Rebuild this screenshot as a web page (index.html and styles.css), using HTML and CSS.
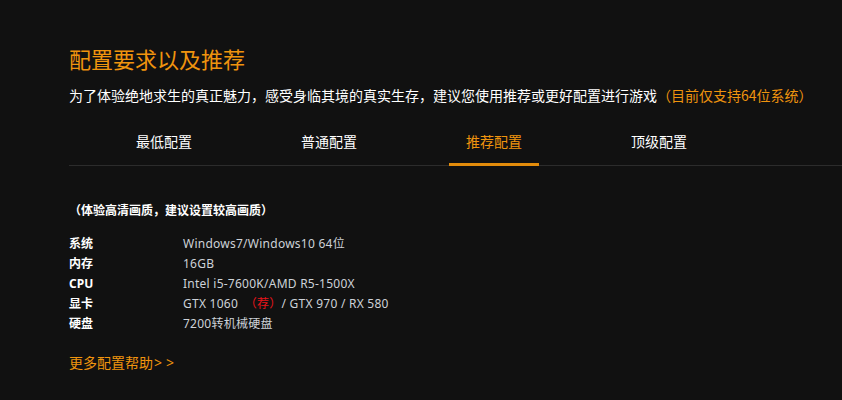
FILE: index.html
```html
<!DOCTYPE html>
<html lang="zh-CN">
<head>
<meta charset="utf-8">
<title>配置要求以及推荐</title>
<link rel="stylesheet" href="styles.css">
</head>
<body>
<div class="page">
  <h1 class="title">配置要求以及推荐</h1>
  <p class="intro">为了体验绝地求生的真正魅力，感受身临其境的真实生存，建议您使用推荐或更好配置进行游戏<span class="hint">（目前仅支持64位系统）</span></p>
  <div class="tabs">
    <div class="tab">最低配置</div>
    <div class="tab">普通配置</div>
    <div class="tab active">推荐配置</div>
    <div class="tab">顶级配置</div>
  </div>
  <p class="note">（体验高清画质，建议设置较高画质）</p>
  <dl class="specs">
    <div class="row"><dt>系统</dt><dd>Windows7/Windows10 64位</dd></div>
    <div class="row"><dt>内存</dt><dd>16GB</dd></div>
    <div class="row"><dt>CPU</dt><dd>Intel i5-7600K/AMD R5-1500X</dd></div>
    <div class="row"><dt>显卡</dt><dd>GTX 1060 &nbsp;<span class="rec">（荐）</span>/ GTX 970 / RX 580</dd></div>
    <div class="row"><dt>硬盘</dt><dd>7200转机械硬盘</dd></div>
  </dl>
  <a class="more" href="#">更多配置帮助<span class="arrows">&gt;&gt;</span></a>
</div>
</body>
</html>
```

FILE: styles.css
```css
html, body {
  margin: 0;
  padding: 0;
  background: #111111;
}
body {
  font-family: "Noto Sans", "Noto Sans CJK SC", sans-serif;
  color: #ffffff;
  overflow: hidden;
}
.page {
  padding: 42px 0 0 69px;
}
.title {
  margin: 0;
  font-size: 22px;
  line-height: 32px;
  font-weight: normal;
  color: #ef940e;
  font-family: "Noto Sans CJK SC", sans-serif;
}
.intro {
  margin: 11px 0 0;
  font-size: 14px;
  line-height: 20px;
  font-family: "Noto Sans CJK SC", sans-serif;
  color: #ffffff;
}
.hint {
  color: #ef940e;
}
.tabs {
  display: flex;
  gap: 75px;
  margin-top: 26px;
  padding-left: 50px;
  border-bottom: 1px solid #2c2c2c;
}
.tab {
  width: 90px;
  text-align: center;
  font-size: 14px;
  line-height: 20px;
  padding-bottom: 12px;
  border-bottom: 3px solid transparent;
  margin-bottom: -1px;
  font-family: "Noto Sans CJK SC", sans-serif;
  color: #ffffff;
}
.tab.active {
  color: #ef940e;
  border-bottom-color: #e38c0b;
}
.note {
  margin: 34px 0 0;
  font-size: 12px;
  line-height: 20px;
  font-weight: bold;
  font-family: "Noto Sans CJK SC", sans-serif;
}
.specs {
  margin: 14px 0 0;
}
.row {
  display: flex;
  font-size: 12px;
  line-height: 20px;
}
.row dt {
  width: 114px;
  font-weight: bold;
  color: #ffffff;
}
.row dd {
  margin: 0;
  color: #cdd2d8;
  letter-spacing: 0.25px;
}
.rec {
  color: #e8141a;
}
.more {
  display: inline-block;
  margin-top: 19px;
  font-size: 14px;
  line-height: 20px;
  color: #ef940e;
  text-decoration: none;
}
.arrows {
  letter-spacing: 4px;
  margin-left: 1px;
}
```
